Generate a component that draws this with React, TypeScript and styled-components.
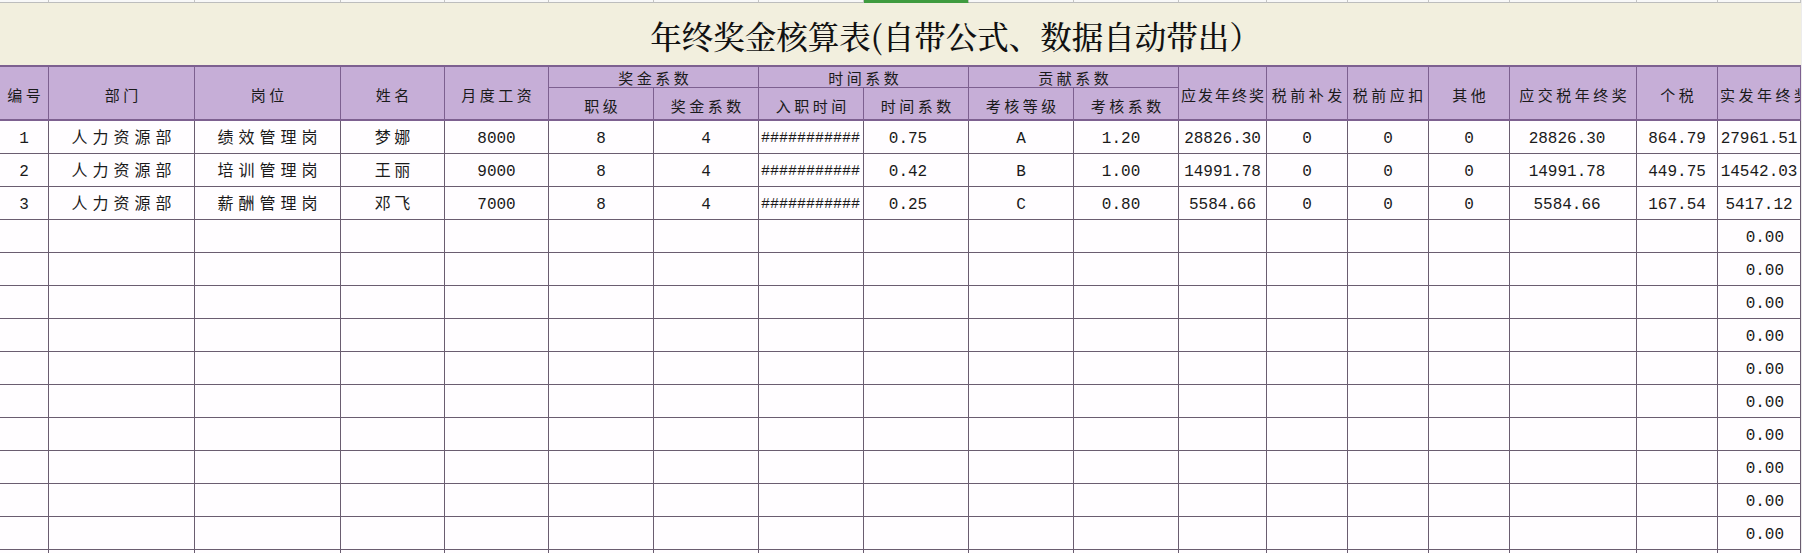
import React from 'react';
import styled, { createGlobalStyle } from 'styled-components';

const GlobalStyle = createGlobalStyle`
  html, body { margin: 0; padding: 0; background: #ececec; }
  body { width: 1802px; height: 553px; overflow: hidden; }
`;

type Col = {
  w: number;
  head: string;
  group?: string;
  headSpacing?: number;
  headLeft?: boolean;
  dataSpacing?: number;
  pr?: number;
};

const COLS: Col[] = [
  { w: 49, head: '编号' },
  { w: 146, head: '部门', dataSpacing: 5 },
  { w: 146, head: '岗位', dataSpacing: 5 },
  { w: 104, head: '姓名', dataSpacing: 3.5 },
  { w: 104, head: '月度工资' },
  { w: 105, head: '职级', group: '奖金系数' },
  { w: 105, head: '奖金系数', group: '奖金系数' },
  { w: 105, head: '入职时间', group: '时间系数' },
  { w: 105, head: '时间系数', group: '时间系数', pr: 16 },
  { w: 105, head: '考核等级', group: '贡献系数' },
  { w: 105, head: '考核系数', group: '贡献系数', pr: 10 },
  { w: 88, head: '应发年终奖', headSpacing: 2 },
  { w: 81, head: '税前补发' },
  { w: 81, head: '税前应扣' },
  { w: 81, head: '其他' },
  { w: 127, head: '应交税年终奖', pr: 12 },
  { w: 81, head: '个税' },
  { w: 83, head: '实发年终奖', headLeft: true },
];

const DATA: string[][] = [
  ['1', '人力资源部', '绩效管理岗', '梦娜', '8000', '8', '4', '###########', '0.75', 'A', '1.20', '28826.30', '0', '0', '0', '28826.30', '864.79', '27961.51'],
  ['2', '人力资源部', '培训管理岗', '王丽', '9000', '8', '4', '###########', '0.42', 'B', '1.00', '14991.78', '0', '0', '0', '14991.78', '449.75', '14542.03'],
  ['3', '人力资源部', '薪酬管理岗', '邓飞', '7000', '8', '4', '###########', '0.25', 'C', '0.80', '5584.66', '0', '0', '0', '5584.66', '167.54', '5417.12'],
];

const EMPTY_ROWS = 11;

const HEAD_LINE = '#7d6090';
const GRID_LINE = '#6a5d70';

const Sheet = styled.div`
  width: 1801px;
  display: flex;
  flex-direction: column;
`;

const ColumnStrip = styled.div`
  display: flex;
  height: 3px;
`;

const StripSegment = styled.div<{ $w: number; $active?: boolean }>`
  box-sizing: border-box;
  width: ${(p) => p.$w}px;
  height: 3px;
  flex: none;
  background: ${(p) => (p.$active ? '#3f9b3f' : '#f8f8f8')};
  border-right: 1px solid #c4c4c4;
  border-bottom: 1px solid ${(p) => (p.$active ? '#3f9b3f' : '#bdbdbd')};
`;

const TitleBar = styled.div`
  box-sizing: border-box;
  height: 62px;
  background: #f2efde;
  display: flex;
  align-items: center;
  justify-content: center;
  padding: 3px 0 0 110px;
  font-family: "Noto Serif CJK SC", "Noto Sans CJK SC", serif;
  font-size: 31.5px;
  font-weight: 500;
  color: #111;
  white-space: nowrap;
`;

const Grid = styled.table`
  border-collapse: separate;
  border-spacing: 0;
  table-layout: fixed;
  width: 1801px;
  background: #fffdff;
`;

const HeadCell = styled.th<{ $row: 'group' | 'sub' | 'span'; $spacing: number; $left?: boolean }>`
  box-sizing: border-box;
  padding: ${(p) => (p.$row === 'group' ? '2px' : '4px')} 0 0 ${(p) => (p.$left ? 2 : p.$spacing)}px;
  background: #c6aed7;
  color: #1a1a1a;
  font-family: "Noto Sans CJK SC", sans-serif;
  font-size: 15px;
  font-weight: 400;
  line-height: 18px;
  letter-spacing: ${(p) => p.$spacing}px;
  text-align: ${(p) => (p.$left ? 'left' : 'center')};
  white-space: nowrap;
  overflow: hidden;
  border-right: 1px solid ${HEAD_LINE};
  border-top: ${(p) => (p.$row === 'sub' ? '0' : `2px solid ${HEAD_LINE}`)};
  border-bottom: ${(p) => (p.$row === 'group' ? `1px solid ${HEAD_LINE}` : `2px solid ${HEAD_LINE}`)};
  height: ${(p) => (p.$row === 'group' ? 22 : p.$row === 'sub' ? 33 : 55)}px;
`;

const DataRow = styled.tr`
  height: 33px;
`;

const Cell = styled.td<{ $spacing: number; $pr: number; $align: 'center' | 'left' | 'right'; $tight?: boolean }>`
  box-sizing: border-box;
  height: 33px;
  padding: 4px ${(p) => p.$pr}px 0 ${(p) => (p.$align === 'left' ? 2 : p.$spacing)}px;
  font-family: "Liberation Mono", "Noto Sans CJK SC", monospace;
  font-size: ${(p) => (p.$tight ? 15 : 16)}px;
  line-height: 20px;
  color: #1a1a1a;
  letter-spacing: ${(p) => p.$spacing}px;
  text-align: ${(p) => p.$align};
  white-space: nowrap;
  overflow: hidden;
  border-right: 1px solid ${GRID_LINE};
  border-bottom: 1px solid ${GRID_LINE};
`;

const isCjk = (s: string) => /[\u4e00-\u9fff]/.test(s);

export default function App() {
  return (
    <>
      <GlobalStyle />
      <Sheet>
        <ColumnStrip>
          {COLS.map((c, i) => (
            <StripSegment key={i} $w={c.w} $active={i === 8} />
          ))}
        </ColumnStrip>
        <TitleBar>年终奖金核算表(自带公式、数据自动带出）</TitleBar>
        <Grid>
          <colgroup>
            {COLS.map((c, i) => (
              <col key={i} style={{ width: c.w }} />
            ))}
          </colgroup>
          <thead>
            <tr>
              {COLS.map((c, i) => {
                if (c.group) {
                  if (i > 0 && COLS[i - 1].group === c.group) return null;
                  const span = COLS.filter((x) => x.group === c.group).length;
                  return (
                    <HeadCell key={i} colSpan={span} $row="group" $spacing={3.5}>
                      {c.group}
                    </HeadCell>
                  );
                }
                return (
                  <HeadCell
                    key={i}
                    rowSpan={2}
                    $row="span"
                    $spacing={c.headSpacing ?? 3.5}
                    $left={c.headLeft}
                  >
                    {c.head}
                  </HeadCell>
                );
              })}
            </tr>
            <tr>
              {COLS.filter((c) => c.group).map((c, i) => (
                <HeadCell key={i} $row="sub" $spacing={3.5}>
                  {c.head}
                </HeadCell>
              ))}
            </tr>
          </thead>
          <tbody>
            {DATA.map((row, r) => (
              <DataRow key={r}>
                {row.map((v, i) => {
                  const col = COLS[i];
                  const hash = v.startsWith('#');
                  return (
                    <Cell
                      key={i}
                      $spacing={isCjk(v) ? col.dataSpacing ?? 3.5 : 0}
                      $pr={col.pr ?? 0}
                      $align={hash ? 'left' : 'center'}
                      $tight={hash}
                    >
                      {v}
                    </Cell>
                  );
                })}
              </DataRow>
            ))}
            {Array.from({ length: EMPTY_ROWS }).map((_, r) => (
              <DataRow key={`e${r}`}>
                {COLS.map((c, i) => (
                  <Cell
                    key={i}
                    $spacing={0}
                    $pr={i === COLS.length - 1 ? 16 : 0}
                    $align={i === COLS.length - 1 ? 'right' : 'center'}
                  >
                    {i === COLS.length - 1 ? '0.00' : ''}
                  </Cell>
                ))}
              </DataRow>
            ))}
          </tbody>
        </Grid>
      </Sheet>
    </>
  );
}
